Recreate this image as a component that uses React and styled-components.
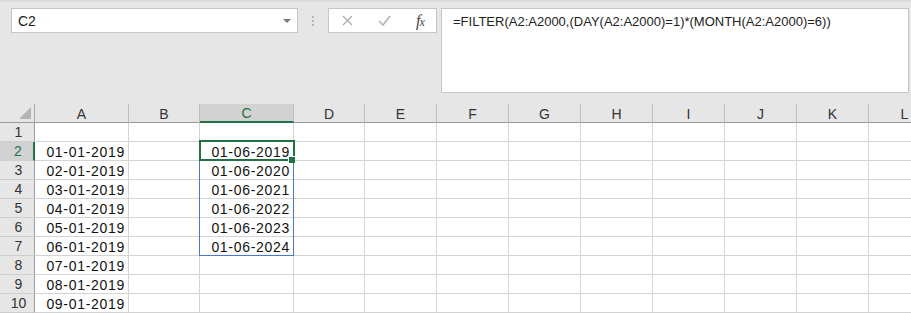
import React from "react";
import styled, { createGlobalStyle } from "styled-components";

const GlobalStyle = createGlobalStyle`
  html, body {
    margin: 0;
    padding: 0;
    background: #ffffff;
    overflow: hidden;
  }
  body {
    font-family: "Liberation Sans", Arial, sans-serif;
  }
`;

const COLS = [
  { key: "A", width: 94 },
  { key: "B", width: 71 },
  { key: "C", width: 94 },
  { key: "D", width: 71 },
  { key: "E", width: 72 },
  { key: "F", width: 72 },
  { key: "G", width: 72 },
  { key: "H", width: 72 },
  { key: "I", width: 72 },
  { key: "J", width: 72 },
  { key: "K", width: 72 },
  { key: "L", width: 72 },
];

const colA = [
  "",
  "01-01-2019",
  "02-01-2019",
  "03-01-2019",
  "04-01-2019",
  "05-01-2019",
  "06-01-2019",
  "07-01-2019",
  "08-01-2019",
  "09-01-2019",
];

const colC = [
  "",
  "01-06-2019",
  "01-06-2020",
  "01-06-2021",
  "01-06-2022",
  "01-06-2023",
  "01-06-2024",
  "",
  "",
  "",
];

const Page = styled.div`
  width: 911px;
  height: 314px;
  overflow: hidden;
  background: #ffffff;
`;

const Toolbar = styled.div`
  height: 104px;
  box-sizing: border-box;
  background: #e6e6e6;
  border-top: 2px solid #dadada;
  display: flex;
  align-items: flex-start;
  padding: 6px 0 0 11px;
`;

const NameBox = styled.div`
  width: 287px;
  height: 25px;
  box-sizing: border-box;
  background: #ffffff;
  border: 1px solid #c6c6c6;
  display: flex;
  align-items: center;
  justify-content: space-between;
  padding: 0 6px 0 6px;
  font-size: 14px;
  color: #222;
`;

const Caret = styled.span`
  width: 0;
  height: 0;
  border-left: 4px solid transparent;
  border-right: 4px solid transparent;
  border-top: 4px solid #7a7a7a;
`;

const Dots = styled.div`
  width: 30px;
  height: 25px;
  display: flex;
  flex-direction: column;
  align-items: center;
  justify-content: center;
  gap: 2px;
`;

const Dot = styled.span`
  width: 2px;
  height: 2px;
  background: #b4b4b4;
`;

const ActionBox = styled.div`
  width: 109px;
  height: 25px;
  box-sizing: border-box;
  background: #ffffff;
  border: 1px solid #c6c6c6;
  display: flex;
  align-items: center;
  padding: 0 0 0 13px;
  gap: 25px;
`;

const Fx = styled.span`
  font-family: "Liberation Serif", "Times New Roman", serif;
  font-style: italic;
  font-size: 16px;
  color: #444;
  letter-spacing: -1px;

  small {
    font-size: 12px;
  }
`;

const FormulaBox = styled.div`
  margin-left: 4px;
  width: 468px;
  height: 85px;
  box-sizing: border-box;
  background: #ffffff;
  border: 1px solid #c6c6c6;
  padding: 5px 0 0 11px;
  font-size: 13px;
  color: #222;
`;

const Grid = styled.div`
  display: flex;
  flex-direction: column;
`;

const Row = styled.div`
  display: flex;
  height: 19px;
`;

const Corner = styled.div`
  width: 35px;
  flex: none;
  box-sizing: border-box;
  background: #e6e6e6;
  border-right: 1px solid #ababab;
  border-bottom: 1px solid #9b9b9b;
  display: flex;
  align-items: flex-end;
  justify-content: flex-end;
  padding: 0 3px 3px 0;
`;

const ColHead = styled.div`
  width: ${(p) => p.$w}px;
  flex: none;
  box-sizing: border-box;
  background: ${(p) => (p.$active ? "#d2d2d2" : "#e6e6e6")};
  border-right: 1px solid #bdbdbd;
  border-bottom: ${(p) =>
    p.$active ? "2px solid #217346" : "1px solid #9b9b9b"};
  display: flex;
  align-items: center;
  justify-content: center;
  font-size: 14px;
  color: ${(p) => (p.$active ? "#217346" : "#333")};
  padding-top: 1px;
`;

const RowHead = styled.div`
  width: 35px;
  flex: none;
  box-sizing: border-box;
  background: ${(p) => (p.$active ? "#d2d2d2" : "#e6e6e6")};
  border-right: ${(p) =>
    p.$active ? "2px solid #217346" : "1px solid #9e9e9e"};
  border-bottom: 1px solid #cfcfcf;
  display: flex;
  align-items: center;
  justify-content: center;
  font-size: 14px;
  color: ${(p) => (p.$active ? "#217346" : "#333")};
  padding-left: 3px;
`;

const Cell = styled.div`
  position: relative;
  width: ${(p) => p.$w}px;
  flex: none;
  box-sizing: border-box;
  border-right: 1px solid #d4d4d4;
  border-bottom: 1px solid #d4d4d4;
  display: flex;
  align-items: center;
  justify-content: flex-end;
  padding-right: 3px;
  padding-top: 1px;
  font-size: 14px;
  letter-spacing: 0.7px;
  color: #111;
  white-space: nowrap;
`;

const SpillFrame = styled.div`
  position: absolute;
  z-index: 2;
  left: -1px;
  top: -1px;
  width: 95px;
  height: ${(p) => p.$rows * 19 + 1}px;
  box-sizing: border-box;
  border: 1px solid #4a78cf;
  pointer-events: none;
`;

const Selection = styled.div`
  position: absolute;
  z-index: 3;
  left: -1px;
  top: -2px;
  width: 96px;
  height: 21px;
  box-sizing: border-box;
  border: 2px solid #217346;
  pointer-events: none;
`;

const FillHandle = styled.span`
  position: absolute;
  right: -2px;
  bottom: -4px;
  width: 6px;
  height: 6px;
  background: #217346;
  border-left: 1px solid #fff;
  border-top: 1px solid #fff;
`;

const CrossIcon = () => (
  <svg width="11" height="11" viewBox="0 0 11 11">
    <path d="M1 1 L10 10 M10 1 L1 10" stroke="#a9a9a9" strokeWidth="1.2" fill="none" />
  </svg>
);

const CheckIcon = () => (
  <svg width="13" height="11" viewBox="0 0 13 11">
    <path d="M1 6 L5 10 L12 1" stroke="#b3b3b3" strokeWidth="1.6" fill="none" />
  </svg>
);

const SelectAll = () => (
  <svg width="12" height="12" viewBox="0 0 12 12">
    <path d="M12 0 L12 12 L0 12 Z" fill="#b4b4b4" />
  </svg>
);

const valueFor = (col, r) => {
  if (col === "A") return colA[r];
  if (col === "C") return colC[r];
  return "";
};

export default function App() {
  const rows = Array.from({ length: 10 }, (_, i) => i);
  return (
    <Page>
      <GlobalStyle />
      <Toolbar>
        <NameBox>
          <span>C2</span>
          <Caret />
        </NameBox>
        <Dots>
          <Dot />
          <Dot />
          <Dot />
        </Dots>
        <ActionBox>
          <CrossIcon />
          <CheckIcon />
          <Fx>
            f<small>x</small>
          </Fx>
        </ActionBox>
        <FormulaBox>
          =FILTER(A2:A2000,(DAY(A2:A2000)=1)*(MONTH(A2:A2000)=6))
        </FormulaBox>
      </Toolbar>
      <Grid>
        <Row>
          <Corner>
            <SelectAll />
          </Corner>
          {COLS.map((c) => (
            <ColHead key={c.key} $w={c.width} $active={c.key === "C"}>
              {c.key}
            </ColHead>
          ))}
        </Row>
        {rows.map((r) => (
          <Row key={r}>
            <RowHead $active={r === 1}>{r + 1}</RowHead>
            {COLS.map((c) => (
              <Cell key={c.key} $w={c.width}>
                {valueFor(c.key, r)}
                {c.key === "C" && r === 1 && (
                  <>
                    <SpillFrame $rows={6} />
                    <Selection>
                      <FillHandle />
                    </Selection>
                  </>
                )}
              </Cell>
            ))}
          </Row>
        ))}
      </Grid>
    </Page>
  );
}
